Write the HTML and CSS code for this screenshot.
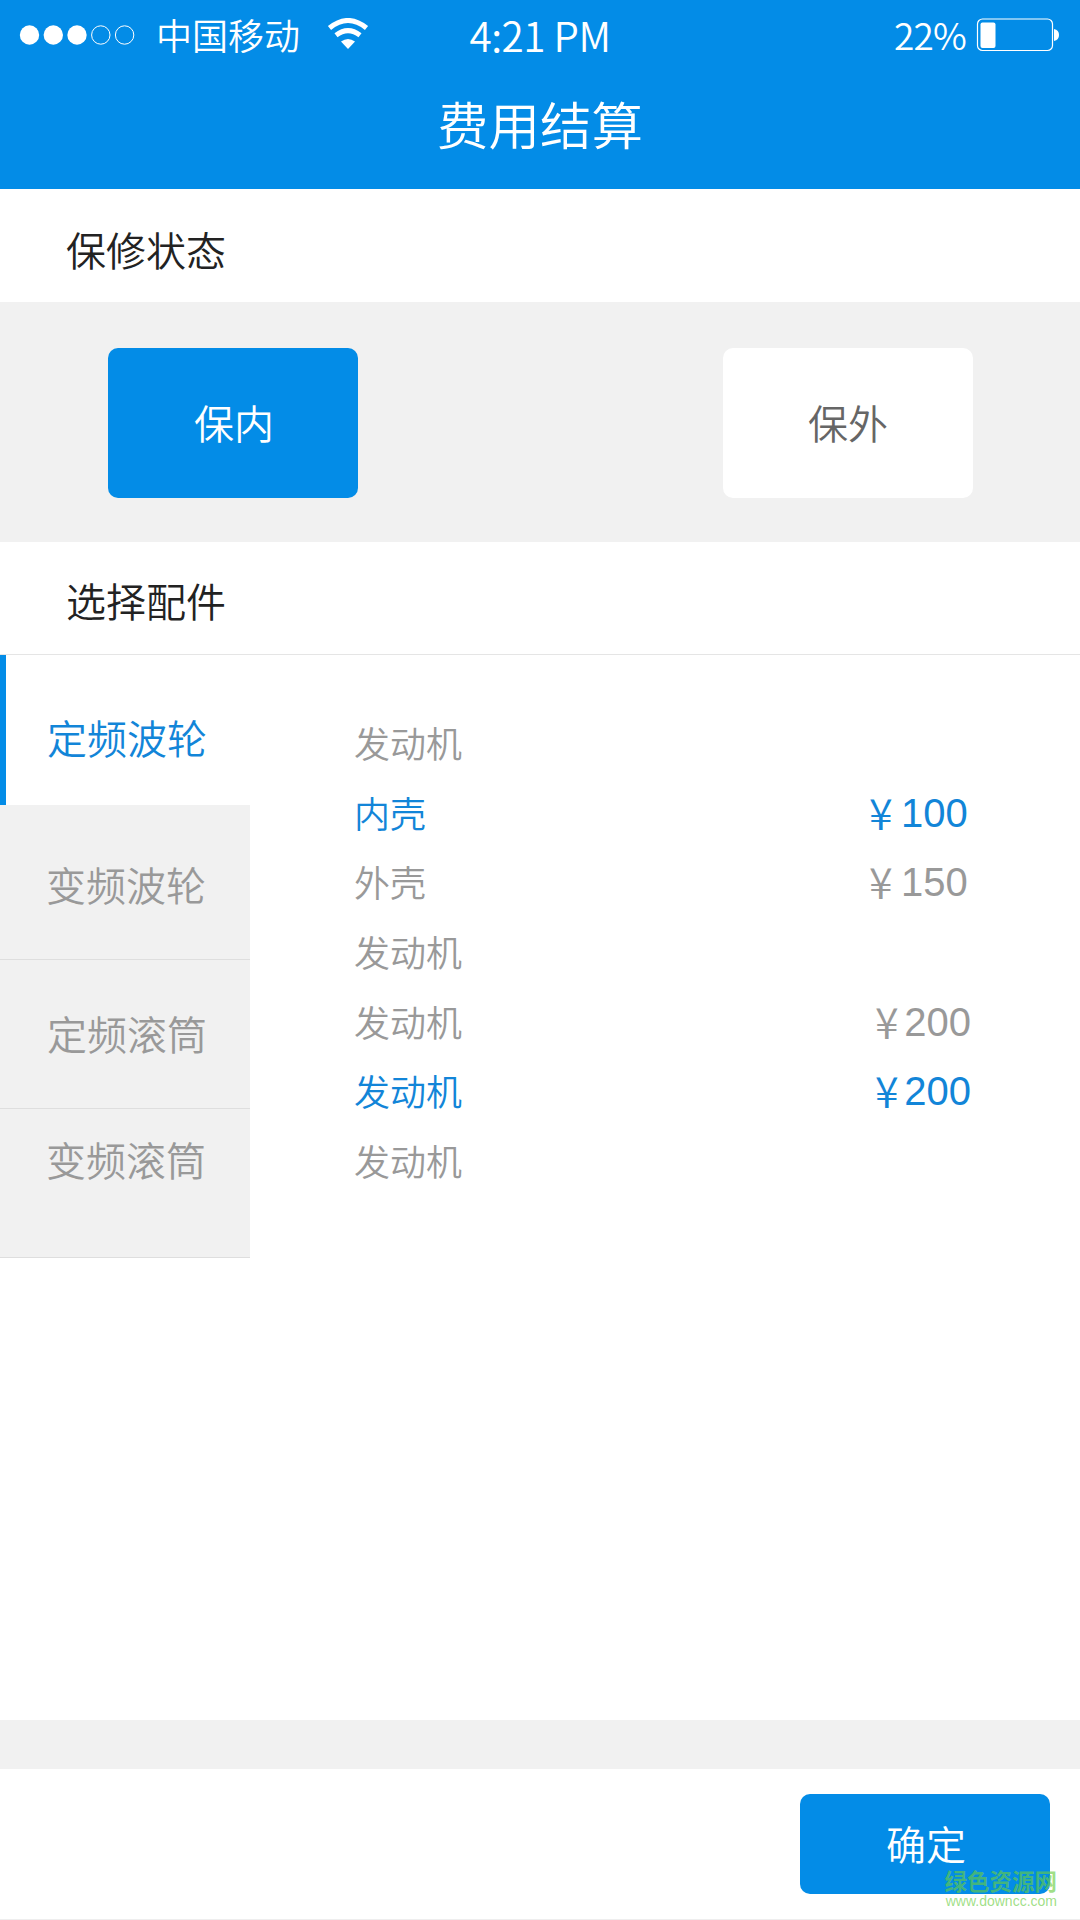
FILE: index.html
```
<!DOCTYPE html>
<html lang="zh-CN">
<head>
    <meta charset="UTF-8">
    <meta name="viewport" content="width=device-width, initial-scale=1.0">
    <title>费用结算</title>
    <link rel="stylesheet" href="styles.css">
</head>
<body>
    <header class="header">
        <div class="status-bar">
            <div class="status-left">
                <svg class="signal" width="120" height="22" viewBox="0 0 120 22">
                    <g fill="#fff">
                        <circle cx="10.5" cy="11" r="9.7"/>
                        <circle cx="34.3" cy="11" r="9.7"/>
                        <circle cx="58" cy="11" r="9.7"/>
                    </g>
                    <g fill="none" stroke="#fff" stroke-width="1">
                        <circle cx="81.8" cy="11" r="9.2"/>
                        <circle cx="105.6" cy="11" r="9.2"/>
                    </g>
                </svg>
                <span class="carrier">中国移动</span>
                <svg class="wifi" width="42" height="32" viewBox="0 0 42 32">
                    <path d="M2.5 10 Q21 -5 39.5 10" fill="none" stroke="#fff" stroke-width="5"/>
                    <path d="M9 17.3 Q21 8 33 17.3" fill="none" stroke="#fff" stroke-width="5"/>
                    <path d="M14 23.5 Q21 18.5 28 23.5 L21 31 Z" fill="#fff"/>
                </svg>
            </div>
            <span class="time">4:21 PM</span>
            <div class="status-right">
                <span class="percent">22%</span>
                <svg class="battery" width="84" height="34" viewBox="0 0 84 34">
                    <rect x="1.5" y="1" width="75" height="31.5" rx="5" fill="none" stroke="#fff" stroke-width="1.2"/>
                    <rect x="4.5" y="4.5" width="15" height="25.5" rx="2" fill="#fff"/>
                    <path d="M78 11 Q83 12 83 17 Q83 22 78 23 Z" fill="#fff"/>
                </svg>
            </div>
        </div>
        <h1>费用结算</h1>
    </header>

    <h2 class="section-title">保修状态</h2>
    <div class="warranty">
        <button class="option active">保内</button>
        <button class="option">保外</button>
    </div>

    <h2 class="section-title parts-title">选择配件</h2>
    <main class="parts">
        <nav class="tabs">
            <div class="tab active">定频波轮</div>
            <div class="tab tab-second">变频波轮</div>
            <div class="tab tab-third">定频滚筒</div>
            <div class="tab tab-last">变频滚筒</div>
        </nav>
        <ul class="items">
            <li><span>发动机</span></li>
            <li class="selected"><span>内壳</span><span class="price"><i>¥</i>100</span></li>
            <li><span>外壳</span><span class="price"><i>¥</i>150</span></li>
            <li><span>发动机</span></li>
            <li><span>发动机</span><span class="price wide"><i>¥</i>200</span></li>
            <li class="selected"><span>发动机</span><span class="price wide"><i>¥</i>200</span></li>
            <li><span>发动机</span></li>
        </ul>
    </main>

    <footer class="footer">
        <button class="confirm">确定</button>
    </footer>

    <div class="watermark">
        <div class="watermark-name">绿色资源网</div>
        <div class="watermark-url">www.downcc.com</div>
    </div>
</body>
</html>
```
FILE: styles.css
```
* {
    box-sizing: border-box;
}
body {
    position: relative;
    display: flex;
    flex-direction: column;
    width: 1080px;
    height: 1920px;
    margin: 0;
    overflow: hidden;
    background-color: #fff;
    font-family: "Noto Sans CJK SC", sans-serif;
    font-weight: 350;
}
h1, h2, ul {
    margin: 0;
    padding: 0;
    font-weight: 350;
}
button {
    border: none;
    border-radius: 10px;
    padding: 0 0 2px;
    font-family: inherit;
    font-weight: 350;
    font-size: 40px;
    line-height: 60px;
}
.header {
    height: 189px;
    background-color: #038ce7;
    color: #fff;
}
.status-bar {
    display: grid;
    grid-template-columns: 1fr auto 1fr;
    align-items: center;
    height: 70px;
    padding: 0 20px 0 19px;
}
.status-left, .status-right {
    display: flex;
    align-items: center;
}
.status-right {
    justify-content: flex-end;
}
.carrier {
    margin-left: 17px;
    padding-bottom: 3px;
    font-size: 36px;
    line-height: 66px;
}
.wifi {
    margin: 0 0 3px 27px;
}
.time {
    padding: 0 0 1px 1px;
    font-size: 40.5px;
    line-height: 65px;
    letter-spacing: -0.5px;
}
.percent {
    margin-right: 10px;
    padding-bottom: 2px;
    font-size: 37px;
    line-height: 66px;
    letter-spacing: -0.8px;
}
h1 {
    font-size: 51.5px;
    line-height: 106px;
    text-align: center;
}
.section-title {
    height: 113px;
    padding: 4px 0 0 66px;
    color: #222;
    font-size: 40px;
    line-height: 113px;
}
.warranty {
    display: flex;
    justify-content: space-between;
    height: 240px;
    padding: 46px 107px 0 108px;
    background-color: #f1f1f1;
}
.option {
    width: 250px;
    height: 150px;
    background-color: #fff;
    color: #666;
}
.option.active, .confirm {
    padding-left: 2px;
    background-color: #038ce7;
    color: #fff;
}
.parts-title {
    border-bottom: 1px solid #e5e5e5;
    padding-top: 2px;
}
.parts {
    display: flex;
    height: 1065px;
}
.tabs {
    width: 250px;
}
.tab {
    height: 149px;
    padding-left: 46px;
    border-bottom: 1px solid #dedede;
    background-color: #f1f1f1;
    color: #999;
    font-size: 40px;
    line-height: 146px;
}
.tab.active {
    height: 150px;
    padding: 7px 0 0 41px;
    border-left: 6px solid #038ce7;
    border-bottom: none;
    background-color: #fff;
    color: #1285d8;
    line-height: 150px;
}
.tab-second {
    height: 155px;
    line-height: 158px;
}
.tab-third {
    padding-left: 47px;
}
.tab-last {
    line-height: 101px;
}
.items {
    flex: 1;
    padding: 53px 109px 0 104px;
    list-style: none;
    color: #999;
    font-size: 36px;
}
.items li {
    display: flex;
    justify-content: space-between;
    height: 69.7px;
    line-height: 69.7px;
}
.items .selected {
    color: #1285d8;
}
.price {
    display: flex;
    width: 102px;
    padding-top: 1px;
    font-family: "Liberation Sans", sans-serif;
    font-size: 40px;
}
.price i {
    width: 32px;
    font-family: "Noto Sans CJK SC", sans-serif;
    font-size: 43px;
    font-style: normal;
    line-height: 65px;
}
.price.wide {
    width: 96px;
}
.footer {
    height: 200px;
    padding: 25px 30px 0 0;
    border-top: 49px solid #f1f1f1;
    border-bottom: 1px solid #eee;
    text-align: right;
}
.confirm {
    width: 250px;
    height: 100px;
}
/* site mark laid over the corner of the button */
.watermark {
    position: absolute;
    right: 23px;
    bottom: 11px;
    color: rgba(105, 205, 65, 0.65);
    text-align: right;
}
.watermark-name {
    font-size: 22.5px;
    font-weight: 700;
    line-height: 22px;
    padding-bottom: 2px;
}
.watermark-url {
    font-family: "Liberation Sans", sans-serif;
    font-size: 14px;
    font-weight: 400;
    line-height: 16px;
}
```
